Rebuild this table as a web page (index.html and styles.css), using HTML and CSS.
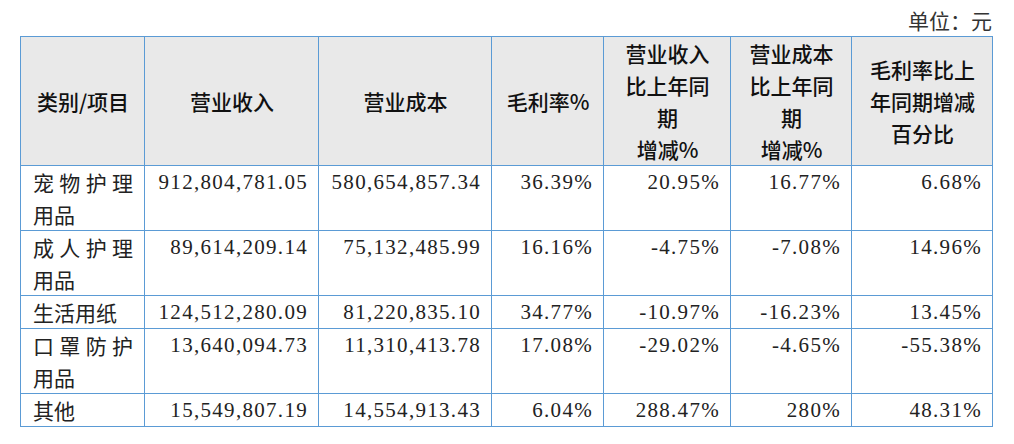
FILE: index.html
```html
<!DOCTYPE html>
<html lang="zh-CN">
<head>
<meta charset="utf-8">
<title>营业收入与成本</title>
<link rel="stylesheet" href="styles.css">
</head>
<body>
<div class="page">
  <div class="unit">单位：元</div>
  <table class="report">
    <colgroup>
      <col class="c1"><col class="c2"><col class="c3"><col class="c4"><col class="c5"><col class="c6"><col class="c7">
    </colgroup>
    <thead>
      <tr>
        <th>类别/项目</th>
        <th>营业收入</th>
        <th>营业成本</th>
        <th>毛利率%</th>
        <th>营业收入<br>比上年同<br>期<br>增减%</th>
        <th>营业成本<br>比上年同<br>期<br>增减%</th>
        <th>毛利率比上<br>年同期增减<br>百分比</th>
      </tr>
    </thead>
    <tbody>
      <tr>
        <td class="name">宠物护理用品</td>
        <td class="num">912,804,781.05</td>
        <td class="num">580,654,857.34</td>
        <td class="num">36.39%</td>
        <td class="num">20.95%</td>
        <td class="num">16.77%</td>
        <td class="num">6.68%</td>
      </tr>
      <tr>
        <td class="name">成人护理用品</td>
        <td class="num">89,614,209.14</td>
        <td class="num">75,132,485.99</td>
        <td class="num">16.16%</td>
        <td class="num">-4.75%</td>
        <td class="num">-7.08%</td>
        <td class="num">14.96%</td>
      </tr>
      <tr>
        <td class="name">生活用纸</td>
        <td class="num">124,512,280.09</td>
        <td class="num">81,220,835.10</td>
        <td class="num">34.77%</td>
        <td class="num">-10.97%</td>
        <td class="num">-16.23%</td>
        <td class="num">13.45%</td>
      </tr>
      <tr>
        <td class="name">口罩防护用品</td>
        <td class="num">13,640,094.73</td>
        <td class="num">11,310,413.78</td>
        <td class="num">17.08%</td>
        <td class="num">-29.02%</td>
        <td class="num">-4.65%</td>
        <td class="num">-55.38%</td>
      </tr>
      <tr>
        <td class="name">其他</td>
        <td class="num">15,549,807.19</td>
        <td class="num">14,554,913.43</td>
        <td class="num">6.04%</td>
        <td class="num">288.47%</td>
        <td class="num">280%</td>
        <td class="num">48.31%</td>
      </tr>
    </tbody>
  </table>
</div>
</body>
</html>
```

FILE: styles.css
```css
html, body {
  margin: 0;
  padding: 0;
  background: #ffffff;
}

.page {
  padding: 4px 22px 0 20px;
  font-family: "Noto Sans CJK SC", sans-serif;
  color: #1a1a1a;
}

.unit {
  text-align: right;
  font-size: 21px;
  line-height: 32px;
  color: #333333;
}

.report {
  border-collapse: collapse;
  table-layout: fixed;
  width: 972px;
}

.c1 { width: 124px; }
.c2 { width: 174px; }
.c3 { width: 173px; }
.c4 { width: 112px; }
.c5 { width: 127px; }
.c6 { width: 121px; }
.c7 { width: 141px; }

.report th,
.report td {
  border: 1px solid #5b9bd5;
  font-size: 21px;
  line-height: 32px;
  padding: 0 11px 0 12px;
}

.report th {
  background: #e9e9e9;
  font-weight: 500;
  text-align: center;
  vertical-align: middle;
  height: 128px;
  color: #111111;
}

.report td {
  vertical-align: top;
}

.report td.name {
  text-align: justify;
  text-justify: inter-character;
  color: #222222;
}

.report td.num {
  text-align: right;
  font-family: "Liberation Serif", "Times New Roman", serif;
  font-size: 21px;
  letter-spacing: 1.3px;
  padding-right: 10px;
  color: #222222;
}
```
